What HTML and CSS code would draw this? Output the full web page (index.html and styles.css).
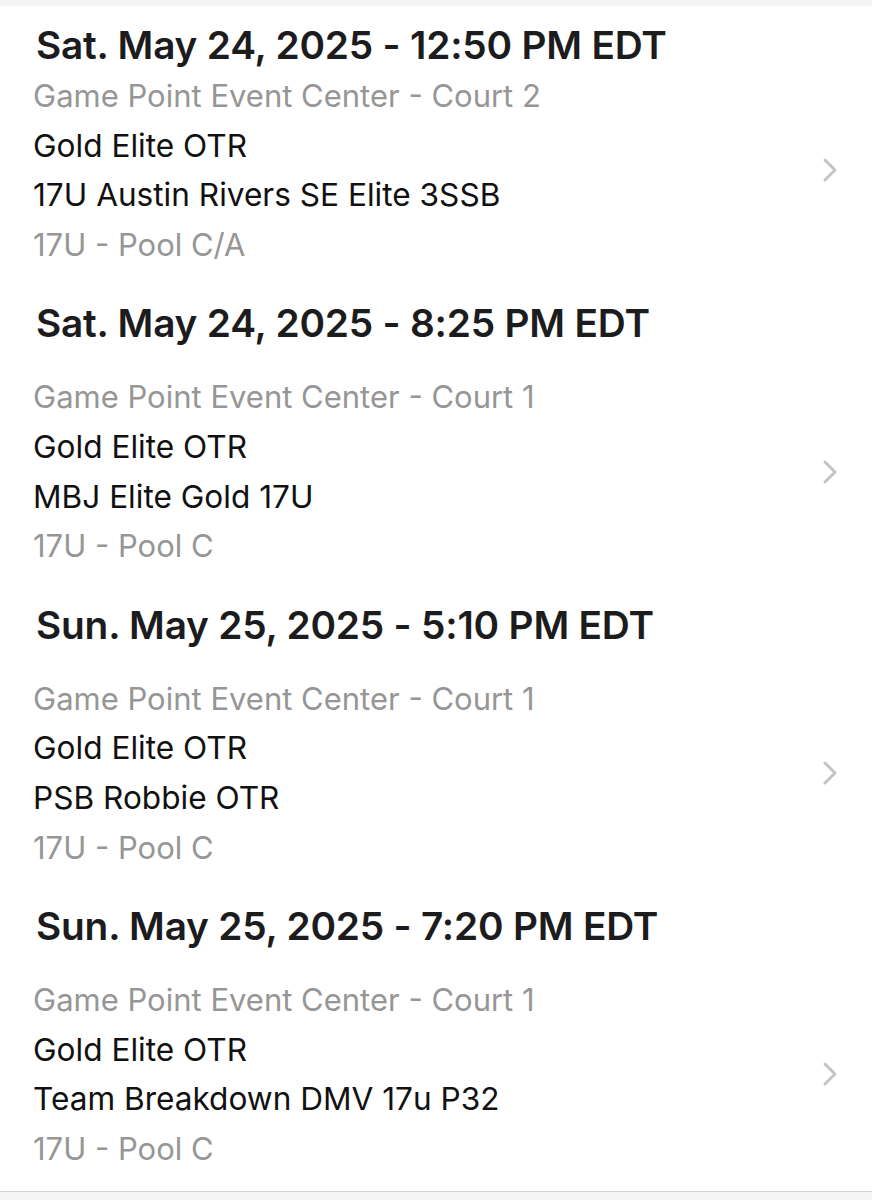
FILE: index.html
```html
<!DOCTYPE html>
<html>
<head>
<meta charset="utf-8">
<link rel="stylesheet" href="styles.css">
</head>
<body>
<div class="topbar"></div>
<div class="list">
  <section class="game first">
    <h2 class="when">Sat. May 24, 2025 - 12:50 PM EDT</h2>
    <div class="row">
      <div class="lines">
        <div class="muted">Game Point Event Center - Court 2</div>
        <div>Gold Elite OTR</div>
        <div>17U Austin Rivers SE Elite 3SSB</div>
        <div class="muted">17U - Pool C/A</div>
      </div>
      <svg class="chev" width="16" height="26" viewBox="0 0 16 26"><path d="M3 3 L13 13 L3 23" fill="none" stroke="#c4c4c8" stroke-width="3" stroke-linecap="round" stroke-linejoin="round"/></svg>
    </div>
  </section>
  <section class="game">
    <h2 class="when">Sat. May 24, 2025 - 8:25 PM EDT</h2>
    <div class="row">
      <div class="lines">
        <div class="muted">Game Point Event Center - Court 1</div>
        <div>Gold Elite OTR</div>
        <div>MBJ Elite Gold 17U</div>
        <div class="muted">17U - Pool C</div>
      </div>
      <svg class="chev" width="16" height="26" viewBox="0 0 16 26"><path d="M3 3 L13 13 L3 23" fill="none" stroke="#c4c4c8" stroke-width="3" stroke-linecap="round" stroke-linejoin="round"/></svg>
    </div>
  </section>
  <section class="game">
    <h2 class="when">Sun. May 25, 2025 - 5:10 PM EDT</h2>
    <div class="row">
      <div class="lines">
        <div class="muted">Game Point Event Center - Court 1</div>
        <div>Gold Elite OTR</div>
        <div>PSB Robbie OTR</div>
        <div class="muted">17U - Pool C</div>
      </div>
      <svg class="chev" width="16" height="26" viewBox="0 0 16 26"><path d="M3 3 L13 13 L3 23" fill="none" stroke="#c4c4c8" stroke-width="3" stroke-linecap="round" stroke-linejoin="round"/></svg>
    </div>
  </section>
  <section class="game">
    <h2 class="when">Sun. May 25, 2025 - 7:20 PM EDT</h2>
    <div class="row">
      <div class="lines">
        <div class="muted">Game Point Event Center - Court 1</div>
        <div>Gold Elite OTR</div>
        <div>Team Breakdown DMV 17u P32</div>
        <div class="muted">17U - Pool C</div>
      </div>
      <svg class="chev" width="16" height="26" viewBox="0 0 16 26"><path d="M3 3 L13 13 L3 23" fill="none" stroke="#c4c4c8" stroke-width="3" stroke-linecap="round" stroke-linejoin="round"/></svg>
    </div>
  </section>
</div>
<div class="bottom"></div>
</body>
</html>
```
FILE: styles.css
```css
html, body {
  margin: 0;
  padding: 0;
  background: #ffffff;
}
body {
  font-family: Inter, "Liberation Sans", Arial, sans-serif;
  color: #111111;
  width: 872px;
  height: 1200px;
  overflow: hidden;
}
.topbar {
  height: 6px;
  background: #f3f3f3;
}
.list {
  padding-bottom: 17px;
  border-bottom: 1.5px solid #d2d2d2;
}
.game {
  padding-top: 29px;
}
.game.first {
  padding-top: 14px;
}
.when {
  margin: 0;
  padding-left: 36px;
  font-size: 38.8px;
  font-weight: 600;
  line-height: 50px;
  color: #1c1c1e;
  letter-spacing: -0.2px;
}
.row {
  display: flex;
  align-items: center;
  margin-top: 24px;
  padding-left: 33px;
  padding-right: 34px;
}
.first .row {
  margin-top: 1px;
}
.lines {
  flex: 1;
  font-size: 31.6px;
  line-height: 49.6px;
  color: #111111;
}
.muted {
  font-size: 31px;
  color: #969696;
}
.chev {
  flex: none;
}
.bottom {
  height: 40px;
  background: #f5f5f5;
}
```
